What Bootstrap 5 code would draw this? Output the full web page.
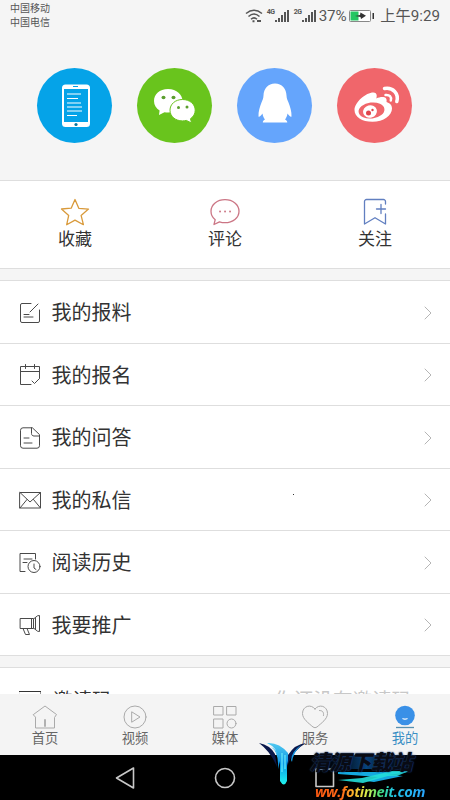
<!DOCTYPE html>
<html lang="zh-CN">
<head>
<meta charset="utf-8">
<meta name="viewport" content="width=device-width, initial-scale=1">
<title>我的</title>
<link href="https://cdn.jsdelivr.net/npm/bootstrap@5.3.0/dist/css/bootstrap.min.css" rel="stylesheet">
<style>
body{font-family:Roboto,"Noto Sans CJK SC",sans-serif;background:#f5f5f5;color:#333;line-height:1.2}
.screen{width:450px;height:800px}
svg{display:block;flex:none}
.line-icon{fill:none;stroke:currentColor;stroke-width:1;stroke-linejoin:round;stroke-linecap:round}
.status{height:30px;padding:2px 10px 0;color:#555}
.carrier{font-size:10px;line-height:13.5px}
.net{font-size:7px;line-height:8px;width:8px;letter-spacing:-.5px;font-weight:700;align-self:flex-start;margin-top:6px}
.pct{font-size:15.2px;margin:0 3px 0 2px;letter-spacing:-.2px}
.clock{font-size:15.2px;margin-left:5px}
.net-two{margin-left:4px}
.logins{height:150px;padding:0 25.500px 0 24.500px}
.login{width:75px;height:75px}
.c-phone{background:#05a3e8}.c-wechat{background:#69c41d}.c-qq{background:#65a5fc}.c-weibo{background:#f0666b}
.quick{height:89px;border-color:#dedede!important;padding-top:17px}
.quick .line-icon{stroke-width:1.3}
.quick .label{font-size:17px;line-height:20px;margin-top:3px}
.menu{margin-top:11px;border-color:#dedede!important}
.menu-row{height:62.5px;border-color:#dedede!important;padding:2px 18px 0 19px;font-size:20px;line-height:24px}
.menu-row .line-icon{color:#4a4a4a}
.menu-row .txt{margin-left:10.500px;padding-top:1px}
.menu-row .chev{color:#b5b5b5}
.invite{margin-top:11px;height:27px;border-color:#dedede!important;padding:15px 39px 0 19px;font-size:19.5px}
.invite span{padding-top:6px}
.hint{color:#c8c8c8}
.tabs{height:61px;background:#f4f4f4;color:#aaa;padding-top:10px}
.tabs .label{font-size:13.3px;line-height:16px;color:#666;margin-top:1px}
.tabs .on .label{color:#3a8fc4}
.sysnav{height:45px}
.stamp{left:255px;top:738px}
.stamp-name{font:italic 900 21px/26px "Noto Sans CJK SC",sans-serif;left:309px;top:748px;color:#080b14;letter-spacing:-.4px;text-shadow:0 0 2px #17366a,0 0 1px #274c80}
.stamp-url{font:italic 700 14.6px/18px "Open Sans",sans-serif;left:315px;top:782px;letter-spacing:-.4px;padding-right:2px;background:linear-gradient(90deg,#ff5a12,#ff6a18 24%,#ffb52b 34%,#d9f04d 46%,#44e07c 58%,#20c7e8 70%,#2aa4ff);-webkit-background-clip:text;background-clip:text;color:transparent}
.speck{left:293px;top:494px;width:1px;height:1px;background:#333}
</style>
<script src="https://cdn.jsdelivr.net/npm/bootstrap@5.3.0/dist/js/bootstrap.bundle.min.js"></script>
</head>
<body>
<div class="screen position-relative overflow-hidden d-flex flex-column">
  <header class="status d-flex justify-content-between">
    <div class="carrier">中国移动<br>中国电信</div>
    <div class="d-flex align-items-center">
      <svg width="18" height="16" viewBox="0 0 18 16" fill="none" stroke="#555" stroke-width="1.5"><path d="M1 5.5Q9-1 17 5.5M3.5 8.5Q9 3.5 14.5 8.5M6 11.2Q9 8.5 12 11.2"/><path d="M7.5 13.2h2M12 13h4" stroke-width="2"/></svg>
      <span class="net ms-1">4G</span>
      <svg width="15" height="14" viewBox="0 0 15 14" fill="#555"><path d="M0 11h2v2H0zM3 9h2v4H3zM6 6h2v7H6zM9 3h2v10H9zM12 1h2v12h-2z"/></svg>
      <span class="net net-two">2G</span>
      <svg width="15" height="14" viewBox="0 0 15 14" fill="#555"><path d="M0 11h2v2H0zM3 9h2v4H3zM6 6h2v7H6zM9 3h2v10H9zM12 1h2v12h-2z"/></svg>
      <span class="pct">37%</span>
      <svg width="26" height="12" viewBox="0 0 26 12"><rect x=".5" y=".5" width="21" height="11" rx="1" fill="#fff" stroke="#888"/><path fill="#24c662" d="M1.5 1.5h8v9h-8z"/><path fill="#333" d="m6 6 5-1 .5-2.5L17 5.7 12 9l-.5-2zM23.500 3H25v6h-1.500z"/></svg>
      <span class="clock">上午9:29</span>
    </div>
  </header>

  <section class="logins d-flex justify-content-around align-items-center">
    <div class="login c-phone rounded-circle"><svg width="75" height="75" viewBox="0 0 75 75"><rect x="25" y="16.500" width="28" height="42.500" rx="3.500" fill="#fff"/><path fill="#05a3e8" d="M27 21h24v33H27z"/><path d="M30 26h14M30 30.500h11M30 35h14M30 39h15M30 43h15M30 47.500h10" stroke="#fff" stroke-width="1.200"/><path d="M36 18.500h5" stroke="#05a3e8"/><circle cx="39" cy="56.500" r="1.600" fill="#05769f"/></svg></div>
    <div class="login c-wechat rounded-circle"><svg width="75" height="75" viewBox="0 0 75 75"><path fill="#fff" d="M31 21c-8.500 0-14 5.300-14 12 0 4.200 2.200 7.500 5.600 9.600L22 47l5.500-2.800c1.200.3 2.400.4 3.700.4C40 44.600 45.500 39 45.500 33S39.800 21 31 21z"/><path fill="#fff" stroke="#69c41d" stroke-width="1" d="M45.500 31.500c-7.300 0-12.500 4.700-12.500 10.700s5.200 10.700 12.500 10.700c1.300 0 2.600-.2 3.800-.5L54.500 55l-1-4.300c3-2 4.700-4.900 4.700-8.500 0-6-5.400-10.700-12.700-10.700z"/><g fill="#5b9e2e"><ellipse cx="26.500" cy="29.500" rx="2" ry="1.700"/><ellipse cx="36.500" cy="29.500" rx="2" ry="1.700"/><circle cx="41.500" cy="39.500" r="1.500"/><circle cx="50" cy="39" r="1.500"/></g></svg></div>
    <div class="login c-qq rounded-circle"><svg width="75" height="75" viewBox="0 0 75 75"><path fill="#fff" d="M38 15.500c-7 0-11.300 5-11.500 12-.1 3-1 4.500-2 7-1.600 4-3.300 9-3 14 .8.700 2.500-.8 4-3 .3 2.300 1.200 4.300 2.500 6-1.300.8-2.200 1.600-2.200 3h24.500c0-1.400-1-2.200-2.300-3 1.300-1.700 2.200-3.700 2.500-6 1.500 2.200 3.200 3.700 4 3 .3-5-1.400-10-3-14-1-2.500-1.900-4-2-7-.2-7-4.500-12-11.500-12z"/></svg></div>
    <div class="login c-weibo rounded-circle"><svg width="75" height="75" viewBox="0 0 75 75"><path fill="#fff" d="M36.500 24.500c3.300.2 3.800 3 2.800 6 5-2.200 11.500-2.400 10.200 3.500 3 1 5.500 2.700 5.500 6.500 0 7-8.500 13.300-19.500 13.300C25 53.800 17.500 49 17.500 42c0-8 12-17.700 19-17.500z"/><ellipse cx="34.500" cy="42.500" rx="13" ry="8" transform="rotate(-7 34.500 42.500)" fill="#f0666b"/><ellipse cx="33" cy="43.500" rx="7" ry="6.300" transform="rotate(-15 33 43.500)" fill="#fff"/><circle cx="31.500" cy="45" r="2.500" fill="#e0444b"/><circle cx="35.500" cy="42" r="1.200" fill="#e0444b"/><g fill="none" stroke="#fff" stroke-linecap="round"><path d="M47.500 20.500c8.500-1.500 14.500 5 12.300 13" stroke-width="3.500"/><path d="M48.500 27c4-.5 6.300 1.800 5.300 5.500" stroke-width="2.500"/></g></svg></div>
  </section>

  <section class="quick bg-white border-top border-bottom d-flex">
    <div class="col-4 d-flex flex-column align-items-center"><svg class="line-icon" width="30" height="28" viewBox="0 0 30 28" style="color:#d99a3b"><path d="m15 1.500 3.800 8.800 9.700.8-7.400 6.300 2.300 9.300-8.400-4.600-8.300 4.600 2-9.300L1.500 11l9.700-.8z"/></svg><span class="label">收藏</span></div>
    <div class="col-4 d-flex flex-column align-items-center"><svg class="line-icon" width="30" height="28" viewBox="0 0 30 28" style="color:#cb7584"><path d="M15 1.700C7.200 1.700 1 6.500 1 13.200c0 3.600 1.600 6.400 4.200 8.500L4 26.500l5.500-2.700c1.700.6 3.500.9 5.500.9 7.800 0 14-4.800 14-11.500S22.800 1.700 15 1.700z"/><path d="M10 13.500h.1M15 13.500h.1M20 13.500h.1" stroke-width="1.800"/></svg><span class="label">评论</span></div>
    <div class="col-4 d-flex flex-column align-items-center"><svg class="line-icon" width="30" height="28" viewBox="0 0 30 28" style="color:#617fc0"><path d="M25.500 6V3.500a2 2 0 0 0-2-2h-17a2 2 0 0 0-2 2V26L15 19.700 25.500 26V16M16.500 11h9M21 6.500v9"/></svg><span class="label">关注</span></div>
  </section>

  <section class="menu bg-white border-top">
    <div class="menu-row border-bottom d-flex align-items-center"><svg class="line-icon" width="22" height="22" viewBox="0 0 22 22"><path d="M12 1.500H3a1.500 1.500 0 0 0-1.500 1.500v16A1.500 1.500 0 0 0 3 20.500h16a1.500 1.500 0 0 0 1.500-1.500V8M19 2l-8 8M5 12.500h5M5 15h9"/></svg><span class="txt">我的报料</span><svg class="chev line-icon ms-auto" width="8" height="14" viewBox="0 0 8 14"><path d="m1 1 6 6-6 6"/></svg></div>
    <div class="menu-row border-bottom d-flex align-items-center"><svg class="line-icon" width="22" height="22" viewBox="0 0 22 22"><path d="M12 20.500H1.500v-18h19V14M1.500 7.500h19M6.500.5v4M15.500.5v4M13 17l2.500 2.500 5-5"/></svg><span class="txt">我的报名</span><svg class="chev line-icon ms-auto" width="8" height="14" viewBox="0 0 8 14"><path d="m1 1 6 6-6 6"/></svg></div>
    <div class="menu-row border-bottom d-flex align-items-center"><svg class="line-icon" width="22" height="22" viewBox="0 0 22 22"><path d="M13 .8H4A2.500 2.500 0 0 0 1.500 3.300v15.400A2.500 2.500 0 0 0 4 21.200h14a2.500 2.500 0 0 0 2.500-2.500V8zM12.500.8V6.500c0 1.500 1 2.500 2.500 2.500h5.500M5 11h5M5 16h8"/></svg><span class="txt">我的问答</span><svg class="chev line-icon ms-auto" width="8" height="14" viewBox="0 0 8 14"><path d="m1 1 6 6-6 6"/></svg></div>
    <div class="menu-row border-bottom d-flex align-items-center"><svg class="line-icon" width="22" height="22" viewBox="0 0 22 22"><path d="M1 3.500h20.500v15.500H1zM1 3.500 11 13 21.500 3.500M1 19l7-8.500M21.500 19l-7-8.500"/></svg><span class="txt">我的私信</span><svg class="chev line-icon ms-auto" width="8" height="14" viewBox="0 0 8 14"><path d="m1 1 6 6-6 6"/></svg></div>
    <div class="menu-row border-bottom d-flex align-items-center"><svg class="line-icon" width="22" height="22" viewBox="0 0 22 22"><path d="M6 19.500H1V1.500h15.500V7M5 7h8M4 10.500h4M15 12v4l2 1.500"/><circle cx="15" cy="14.500" r="6"/></svg><span class="txt">阅读历史</span><svg class="chev line-icon ms-auto" width="8" height="14" viewBox="0 0 8 14"><path d="m1 1 6 6-6 6"/></svg></div>
    <div class="menu-row border-bottom d-flex align-items-center"><svg class="line-icon" width="22" height="22" viewBox="0 0 22 22"><path d="M1.500 4.500h13v10h-13zM12.500 4.500v10M14.500 5l4-3.200 2-.3v16l-2-.3-4-3.200M16.500 4v11M4 14.500l2.500 6h4l-2.500-6"/></svg><span class="txt">我要推广</span><svg class="chev line-icon ms-auto" width="8" height="14" viewBox="0 0 8 14"><path d="m1 1 6 6-6 6"/></svg></div>
  </section>

  <section class="invite bg-white border-top d-flex overflow-hidden flex-shrink-0">
    <svg class="line-icon" width="22" height="22" viewBox="0 0 22 22"><path d="M0 8.500h22v13H0z"/></svg><span class="ms-2 ps-1">邀请码</span><span class="hint ms-auto">你还没有邀请码</span>
  </section>

  <nav class="tabs d-flex flex-shrink-0">
    <div class="col d-flex flex-column align-items-center"><svg class="line-icon" width="26" height="26" viewBox="0 0 26 26"><path d="M1.500 10.500 13 2l11.500 8.500-2 3V24h-19V13.500z"/><path d="M13 16v6" stroke-width="1.800"/></svg><span class="label">首页</span></div>
    <div class="col d-flex flex-column align-items-center"><svg class="line-icon" width="26" height="26" viewBox="0 0 26 26"><circle cx="13" cy="13" r="11"/><path d="m10 8 8 5-8 5z"/></svg><span class="label">视频</span></div>
    <div class="col d-flex flex-column align-items-center"><svg class="line-icon" width="26" height="26" viewBox="0 0 26 26"><path d="M2 2.500h9v8.500H2zM15 2.500h9v8.500h-9zM2 15h9v9H2z"/><circle cx="19.500" cy="19.500" r="4.500"/></svg><span class="label">媒体</span></div>
    <div class="col d-flex flex-column align-items-center"><svg class="line-icon" width="28" height="26" viewBox="0 0 28 26"><path d="M14 5C10-.5 1.500 2 1.500 9.500c0 5.500 6 9.500 10.500 13.500q2 1.500 4 0c4.500-4 10.500-8 10.500-13.500C26.500 2 18 -.5 14 5zM18.500 6.500c3 0 4.500 1.500 4 5"/></svg><span class="label">服务</span></div>
    <div class="on col d-flex flex-column align-items-center"><svg width="26" height="26" viewBox="0 0 26 26"><circle cx="13" cy="11.500" r="9.800" fill="#3990e7"/><path d="M10.500 14.500q2.500 1.200 5 0" fill="none" stroke="#fff" stroke-width="1.200"/><path d="M4 23.500h18" stroke="#5690b0" stroke-width="1.300"/></svg><span class="label">我的</span></div>
  </nav>

  <footer class="sysnav bg-black d-flex justify-content-center align-items-center flex-shrink-0">
    <svg width="220" height="24" viewBox="0 0 220 24" fill="none" stroke="#c8c8c8" stroke-width="1.600" stroke-linejoin="round"><path d="M18.500 2v20L1.500 12z"/><circle cx="110" cy="12" r="9.500"/><path d="M201 3h17.500v17.500H201z"/></svg>
  </footer>

  <svg class="stamp position-absolute" width="175" height="50" viewBox="0 0 175 50">
    <defs><linearGradient id="cy" x2="0" y2="1"><stop stop-color="#52c9f0"/><stop offset=".5" stop-color="#0a98e8"/><stop offset="1" stop-color="#20f5ee"/></linearGradient><linearGradient id="bl"><stop stop-color="#071224" stop-opacity="0"/><stop offset=".5" stop-color="#0a5ca8"/><stop offset="1" stop-color="#071224" stop-opacity="0"/></linearGradient></defs>
    <path d="M4 5q11 2 16 11l2 13Q16 14 4 5zm47 0Q40 6 33 17l-1 12Q37 13 51 5z" fill="#09174b"/><path d="M36 22q1-9 10-15-8 8-9 17z" fill="#1599e3"/>
    <path d="M12 5q12-1 21 10v12l-1-4v20q-3 7-7 0V23l-2 8q1-17-7-22 7 3 7 11 0-10-11-15z" fill="url(#cy)"/><path d="M27 15v19M30 17v14" stroke="#78f8ff"/>
    <path d="M72 17h86l-7 14H65z" fill="url(#bl)" opacity=".75"/>
    <path d="M79 32h81l-19 6h16l-40 11-13-2 16-7-14-3-27-1z" fill="#000" opacity=".4"/>
    <path d="M83 34h70l-20 3 15 1-29 6-8-1 12-4-40-3z" fill="#14a9df"/><path d="M137 33h17l-12 5h-9l-25 7-25-3 24-2z" fill="#23ded9" opacity=".9"/>
  </svg>
  <div class="stamp-name position-absolute text-nowrap">清源下载站</div>
  <div class="stamp-url position-absolute text-nowrap">ww.fotimeit.com</div>
  <div class="speck position-absolute"></div>
</div>
</body>
</html>
